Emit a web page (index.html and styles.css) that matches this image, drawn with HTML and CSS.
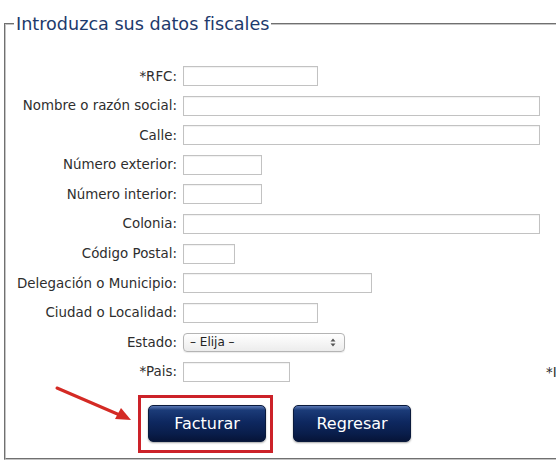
FILE: index.html
```html
<!DOCTYPE html>
<html lang="es">
<head>
<meta charset="utf-8">
<title>Datos fiscales</title>
<link rel="stylesheet" href="styles.css">
</head>
<body>
<div class="page">
  <fieldset class="fiscal">
    <legend class="fiscal-title">Introduzca sus datos fiscales</legend>
    <div class="form-grid">
      <label class="lbl">*RFC:</label>
      <div class="ctl"><input class="inp w-135" type="text"></div>

      <label class="lbl">Nombre o razón social:</label>
      <div class="ctl"><input class="inp w-357" type="text"></div>

      <label class="lbl">Calle:</label>
      <div class="ctl"><input class="inp w-357" type="text"></div>

      <label class="lbl">Número exterior:</label>
      <div class="ctl"><input class="inp w-79" type="text"></div>

      <label class="lbl">Número interior:</label>
      <div class="ctl"><input class="inp w-79" type="text"></div>

      <label class="lbl">Colonia:</label>
      <div class="ctl"><input class="inp w-357" type="text"></div>

      <label class="lbl">Código Postal:</label>
      <div class="ctl"><input class="inp w-52" type="text"></div>

      <label class="lbl">Delegación o Municipio:</label>
      <div class="ctl"><input class="inp w-189" type="text"></div>

      <label class="lbl">Ciudad o Localidad:</label>
      <div class="ctl"><input class="inp w-135" type="text"></div>

      <label class="lbl">Estado:</label>
      <div class="ctl">
        <div class="select">
          <span class="select-text">– Elija –</span>
          <span class="select-arrows">
            <svg width="6" height="9" viewBox="0 0 6 9"><path d="M3 0.5 L5.5 3.5 H0.5 Z M3 8.5 L5.5 5.5 H0.5 Z" fill="#555"/></svg>
          </span>
        </div>
      </div>

      <label class="lbl">*Pais:</label>
      <div class="ctl"><input class="inp w-107" type="text"><span class="lbl side">*I</span></div>
    </div>

    <div class="actions">
      <span class="highlight"><button class="btn" type="button">Facturar</button></span>
      <button class="btn" type="button">Regresar</button>
    </div>
  </fieldset>

  <svg class="arrow" width="140" height="50" viewBox="0 0 140 50">
    <line x1="57" y1="18" x2="122" y2="46" stroke="#d42a24" stroke-width="3" stroke-linecap="round"/>
    <path d="M131 50 L115 49 L121 38 Z" fill="#d42a24"/>
  </svg>
</div>
</body>
</html>
```

FILE: styles.css
```css
html, body {
  margin: 0;
  padding: 0;
  background: #ffffff;
  overflow: hidden;
}

.page {
  position: relative;
  width: 556px;
  height: 461px;
  overflow: hidden;
  font-family: "DejaVu Sans", Verdana, sans-serif;
  color: #2b2b2b;
}

.fiscal {
  margin: 14px 0 0 4px;
  padding: 0 0 16px 0;
  width: 640px;
  min-width: 0;
  border: 2px groove #c4c4c4;
  border-right: none;
  box-sizing: border-box;
}

.fiscal-title {
  font-size: 17.6px;
  line-height: 20px;
  color: #1d3a6c;
  padding: 0 2px;
  margin-left: 8px;
}

.form-grid {
  display: grid;
  grid-template-columns: 171px auto;
  column-gap: 6px;
  row-gap: 9.6px;
  margin-top: 32px;
  align-items: center;
}

.lbl {
  font-size: 13.4px;
  text-align: right;
  color: #2e2e2e;
  white-space: nowrap;
}

.ctl {
  display: flex;
  align-items: center;
  height: 20px;
}

.inp {
  box-sizing: border-box;
  height: 20px;
  margin: 0;
  padding: 0 3px;
  border: 1px solid #c2c2c2;
  box-shadow: inset 0 1px 1px rgba(0,0,0,0.06);
  background: #fff;
  font: inherit;
}

.w-52 { width: 52px; }
.w-79 { width: 79px; }
.w-107 { width: 107px; }
.w-135 { width: 135px; }
.w-189 { width: 189px; }
.w-357 { width: 357px; }

.side {
  margin-left: 256px;
  margin-top: 2px;
}

.select {
  box-sizing: border-box;
  width: 162px;
  height: 19px;
  border: 1px solid #b4b4b4;
  border-radius: 4px;
  background: linear-gradient(#ffffff, #ececec);
  box-shadow: 0 1px 1px rgba(0,0,0,0.08);
  display: flex;
  align-items: center;
  justify-content: space-between;
  padding: 0 8px 0 6px;
}

.select-text {
  font-size: 12px;
  color: #222;
}

.select-arrows {
  display: flex;
  align-items: center;
}

.actions {
  display: flex;
  gap: 27px;
  margin: 23px 0 0 142px;
}

.highlight {
  position: relative;
  display: inline-flex;
}

.highlight::after {
  content: "";
  position: absolute;
  left: -10px;
  right: -7px;
  top: -10px;
  bottom: -11px;
  border: 3px solid #cc2229;
  box-sizing: border-box;
}

.btn {
  width: 118px;
  height: 37px;
  margin: 0;
  padding: 0;
  border: 1px solid #0a1a3c;
  border-radius: 5px;
  background: linear-gradient(#5a78b4 0%, #1b3b78 12%, #0e2860 45%, #091d4a 80%, #061438 100%);
  box-shadow: 0 1px 2px rgba(0,0,0,0.35);
  color: #ffffff;
  font-family: "DejaVu Sans", Verdana, sans-serif;
  font-size: 16px;
}

.arrow {
  position: absolute;
  left: 0;
  top: 370px;
}
```
